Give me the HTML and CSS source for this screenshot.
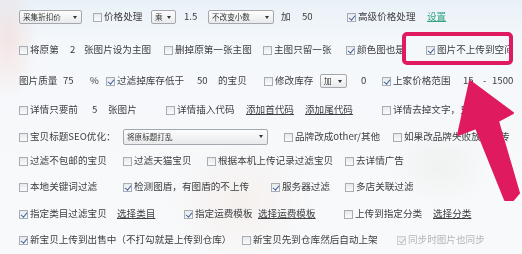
FILE: index.html
```html
<!DOCTYPE html>
<html lang="zh-CN">
<head>
<meta charset="utf-8">
<title>上传设置</title>
<link rel="stylesheet" href="styles.css">
</head>
<body>
<div class="panel">
  <div class="row r1">
    <span class="sel sel-price">采集折扣价</span>
    <label class="cb"><i class="box"></i>价格处理</label>
    <span class="sel sel-op">乘</span>
    <span class="num">1.5</span>
    <span class="sel sel-dec">不改变小数</span>
    <span>加</span>
    <span class="num">50</span>
    <label class="cb on"><i class="box"></i>高级价格处理</label>
    <a class="link green">设置</a>
  </div>
  <div class="row r2">
    <label class="cb"><i class="box"></i>将原第</label>
    <span class="num">2</span>
    <span>张图片设为主图</span>
    <label class="cb"><i class="box"></i>删掉原第一张主图</label>
    <label class="cb"><i class="box"></i>主图只留一张</label>
    <label class="cb on"><i class="box"></i>颜色图也是</label>
    <label class="cb on"><i class="box"></i>图片不上传到空间</label>
  </div>
  <div class="row r3">
    <span>图片质量</span>
    <span class="num">75</span>
    <span>%</span>
    <label class="cb on"><i class="box"></i>过滤掉库存低于</label>
    <span class="num">50</span>
    <span>的宝贝</span>
    <label class="cb"><i class="box"></i>修改库存</label>
    <span class="sel sel-op2">加</span>
    <span class="num">0</span>
    <label class="cb on"><i class="box"></i>上家价格范围</label>
    <span class="num">15</span>
    <span>-</span>
    <span class="num">1500</span>
  </div>
  <div class="row r4">
    <label class="cb"><i class="box"></i>详情只要前</label>
    <span class="num">5</span>
    <span>张图片</span>
    <label class="cb"><i class="box"></i>详情插入代码</label>
    <a class="link">添加首代码</a>
    <a class="link">添加尾代码</a>
    <label class="cb"><i class="box"></i>详情去掉文字，只留图片</label>
  </div>
  <div class="row r5">
    <label class="cb"><i class="box"></i>宝贝标题SEO优化：</label>
    <span class="sel sel-seo">将原标题打乱</span>
    <label class="cb"><i class="box"></i>品牌改成other/其他</label>
    <label class="cb"><i class="box"></i>如果改品牌失败放弃上传</label>
  </div>
  <div class="row r6">
    <label class="cb"><i class="box"></i>过滤不包邮的宝贝</label>
    <label class="cb"><i class="box"></i>过滤天猫宝贝</label>
    <label class="cb"><i class="box"></i>根据本机上传记录过滤宝贝</label>
    <label class="cb"><i class="box"></i>去详情广告</label>
  </div>
  <div class="row r7">
    <label class="cb"><i class="box"></i>本地关键词过滤</label>
    <label class="cb on"><i class="box"></i>检测图盾，有图盾的不上传</label>
    <label class="cb on"><i class="box"></i>服务器过滤</label>
    <label class="cb"><i class="box"></i>多店关联过滤</label>
  </div>
  <div class="row r8">
    <label class="cb on"><i class="box"></i>指定类目过滤宝贝</label>
    <a class="link">选择类目</a>
    <label class="cb on"><i class="box"></i>指定运费模板</label>
    <a class="link">选择运费模板</a>
    <label class="cb"><i class="box"></i>上传到指定分类</label>
    <a class="link">选择分类</a>
  </div>
  <div class="row r9">
    <label class="cb on"><i class="box"></i>新宝贝上传到出售中（不打勾就是上传到仓库）</label>
    <label class="cb"><i class="box"></i>新宝贝先到仓库然后自动上架</label>
    <label class="cb on dis"><i class="box"></i>同步时图片也同步</label>
  </div>
</div>
<svg class="annot" width="522" height="254" viewBox="0 0 522 254" aria-hidden="true">
  <rect x="404" y="34" width="107" height="29" rx="3" fill="none" stroke="#e01a5e" stroke-width="4"/>
  <polygon points="470,81 513,113 498,121 519,193 513,200 505,200 476,128 458,135" fill="#e01a5e" stroke="#e01a5e" stroke-width="2" stroke-linejoin="round"/>
</svg>
</body>
</html>
```

FILE: styles.css
```css
* {
  box-sizing: border-box;
  margin: 0;
  padding: 0;
}

html,
body {
  width: 522px;
  height: 254px;
  overflow: hidden;
}

body {
  position: relative;
  font-family: "Noto Sans CJK SC", "Noto Sans", sans-serif;
  font-size: 9.6px;
  line-height: 1.2;
  color: #3b3d40;
  background:
    radial-gradient(ellipse 30px 60px at 8px 40px, rgba(240, 170, 160, 0.25), rgba(240, 170, 160, 0) 100%),
    radial-gradient(ellipse 70px 60px at 240px 200px, rgba(240, 200, 180, 0.18), rgba(240, 200, 180, 0) 100%),
    radial-gradient(ellipse 50px 40px at 440px 165px, rgba(220, 220, 210, 0.25), rgba(220, 220, 210, 0) 100%),
    linear-gradient(#e9f1f8, #f5f8fb 18%, #f8f9fa);
}

.panel {
  filter: blur(0.35px);
}

.row {
  display: grid;
  align-items: center;
  padding-left: 19px;
  white-space: nowrap;
}

.r1 { height: 34px; grid-template-columns: 74px 58px 33px 24px 73px 21px 45px 80px auto; }
.r2 { height: 32px; grid-template-columns: 51px 14px 80px 99px 83px 80px auto; }
.r3 { height: 30px; grid-template-columns: 44px 27px 16px 91px 21px 46px 56px 41px 21px 81px 20px 9px auto; }
.r4 { height: 28px; grid-template-columns: 73px 16px 58px 80px 59px 77px auto; }
.r5 { height: 26px; grid-template-columns: 104px 161px 109px auto; }
.r6 { height: 22px; grid-template-columns: 104px 84px 138px auto; }
.r7 { height: 30px; grid-template-columns: 104px 148px 74px auto; }
.r8 { height: 24px; grid-template-columns: 98px 67px 74px 86px 89px auto; }
.r9 { height: 28px; grid-template-columns: 223px 155px auto; }

.cb {
  display: inline-flex;
  align-items: center;
  gap: 2px;
}

.box {
  flex: none;
  position: relative;
  width: 9px;
  height: 9px;
  border: 1px solid #a7adb5;
  background: linear-gradient(#e6e9ec, #fbfbfc);
}

.on .box::after {
  content: "";
  position: absolute;
  left: 2.3px;
  top: 0;
  width: 2.6px;
  height: 5px;
  border: solid #3f5d9c;
  border-width: 0 1.3px 1.3px 0;
  transform: rotate(38deg);
}

.dis {
  color: #b3b6ba;
}

.dis .box {
  border-color: #cdd0d4;
}

.dis .box::after {
  border-color: #b8bcc2;
}

.num {
  color: #3b3d40;
}

.sel {
  position: relative;
  display: flex;
  align-items: center;
  height: 14px;
  padding-left: 3px;
  font-size: 7.6px;
  color: #333;
  border: 1px solid #a3a8ae;
  border-radius: 2px;
  background: linear-gradient(#fdfdfd, #e9eaec);
}

.sel::after {
  content: "";
  position: absolute;
  right: 4px;
  top: 5px;
  border-left: 2.5px solid transparent;
  border-right: 2.5px solid transparent;
  border-top: 3px solid #333;
}

.sel-price { width: 63px; }
.sel-op { width: 25px; }
.sel-dec { width: 66px; }
.sel-op2 { width: 27px; }
.sel-seo { width: 145px; height: 16px; }

.link {
  color: #3b3d40;
  text-decoration: underline;
  text-underline-offset: 1px;
}

.green {
  color: #35a386;
}

.annot {
  position: absolute;
  left: 0;
  top: 0;
  pointer-events: none;
}
```
